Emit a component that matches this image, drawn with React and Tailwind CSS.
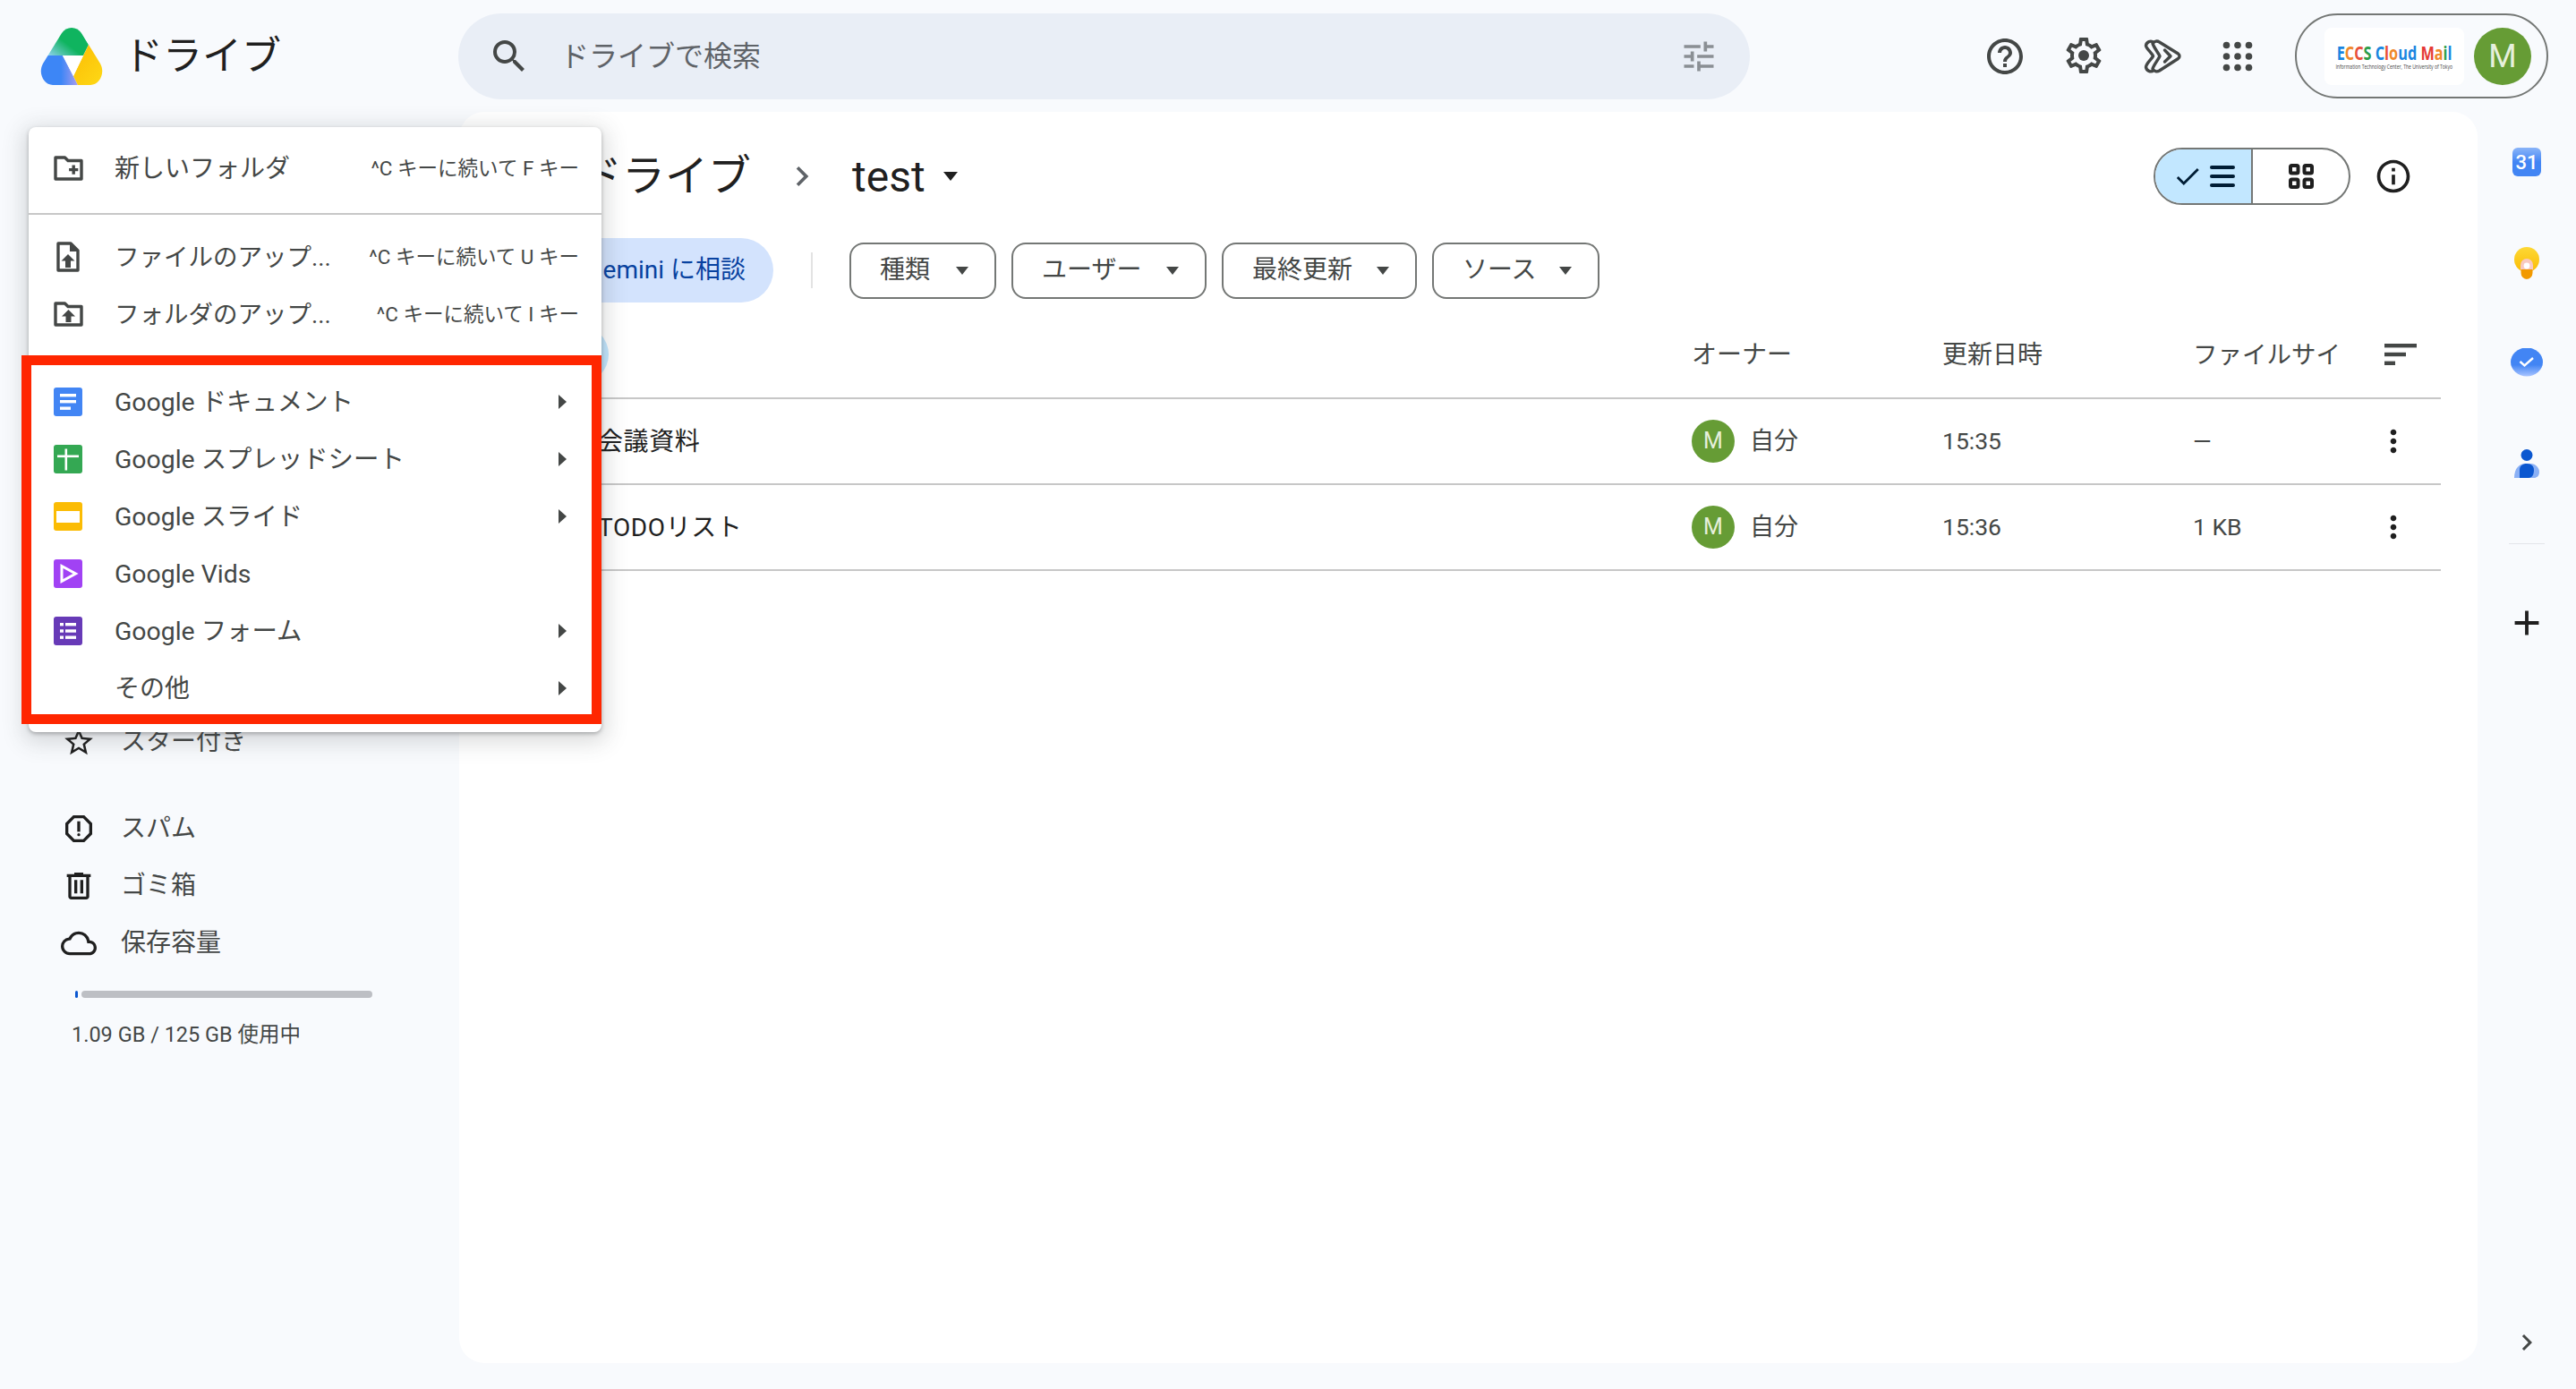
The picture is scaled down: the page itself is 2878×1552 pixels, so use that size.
import {
  MdSearch, MdTune, MdHelpOutline, MdOutlineInfo, MdCheck, MdMoreVert, MdAdd, MdChevronRight,
  MdArrowUpward, MdStarBorder, MdOutlineReport, MdOutlineCloud,
} from 'react-icons/md'

const FONT = 'font-[Roboto,"Noto_Sans_CJK_JP",sans-serif]'

function DriveLogo() {
  return (
    <svg width="70" height="64" viewBox="0 0 70 64" className="shrink-0">
      <defs>
        <clipPath id="logo-shape">
          <path d="M24 6 C29 -2 41 -2 46 6 L67 40 C73 51 66 64 56 64 L14 64 C4 64 -3 51 3 40 Z" />
        </clipPath>
        <linearGradient id="lg-green" x1="0" y1="1" x2="1" y2="0">
          <stop offset="0" stopColor="#8fd3f0" />
          <stop offset="0.42" stopColor="#0fb45f" />
        </linearGradient>
        <linearGradient id="lg-blue" x1="0" y1="0" x2="1" y2="0">
          <stop offset="0.6" stopColor="#3d86f6" />
          <stop offset="1" stopColor="#a99df0" />
        </linearGradient>
        <linearGradient id="lg-yellow" x1="0" y1="0" x2="1" y2="1">
          <stop offset="0" stopColor="#fbbc04" />
          <stop offset="1" stopColor="#ffdf1a" />
        </linearGradient>
      </defs>
      <g clipPath="url(#logo-shape)">
        <polygon points="8,31 48,31 54,19 40,-5 25,-5" fill="url(#lg-green)" />
        <polygon points="-5,31 25,31 42,64 42,70 -5,70" fill="url(#lg-blue)" />
        <polygon points="54,19 80,19 80,70 42,70 42,64 37,54" fill="url(#lg-yellow)" />
        <polygon points="25,31 48,31 37,54" fill="#fff" />
      </g>
    </svg>
  )
}

function SettingsIcon() {
  return (
    <svg width="48" height="48" viewBox="0 0 24 24" fill="#444746">
      <path d="M19.43 12.98c.04-.32.07-.64.07-.98 0-.34-.03-.66-.07-.98l2.11-1.65c.19-.15.24-.42.12-.64l-2-3.46c-.09-.16-.26-.25-.44-.25-.06 0-.12.01-.17.03l-2.49 1c-.52-.4-1.08-.73-1.69-.98l-.38-2.65C14.46 2.18 14.25 2 14 2h-4c-.25 0-.46.18-.49.42l-.38 2.65c-.61.25-1.17.59-1.69.98l-2.49-1c-.06-.02-.12-.03-.18-.03-.17 0-.34.09-.43.25l-2 3.46c-.13.22-.07.49.12.64l2.11 1.65c-.04.32-.07.65-.07.98 0 .33.03.66.07.98l-2.11 1.65c-.19.15-.24.42-.12.64l2 3.46c.09.16.26.25.44.25.06 0 .12-.01.17-.03l2.49-1c.52.4 1.08.73 1.69.98l.38 2.65c.03.24.24.42.49.42h4c.25 0 .46-.18.49-.42l.38-2.65c.61-.25 1.17-.59 1.69-.98l2.49 1c.06.02.12.03.18.03.17 0 .34-.09.43-.25l2-3.46c.12-.22.07-.49-.12-.64l-2.11-1.65zm-1.98-1.71c.04.31.05.52.05.73 0 .21-.02.43-.05.73l-.14 1.13.89.7 1.08.84-.7 1.21-1.27-.51-1.04-.42-.9.68c-.43.32-.84.56-1.25.73l-1.06.43-.16 1.13-.2 1.35h-1.4l-.19-1.35-.16-1.13-1.06-.43c-.43-.18-.83-.41-1.23-.71l-.91-.7-1.06.43-1.27.51-.7-1.21 1.08-.84.89-.7-.14-1.13c-.03-.31-.05-.54-.05-.74s.02-.43.05-.73l.14-1.13-.89-.7-1.08-.84.7-1.21 1.27.51 1.04.42.9-.68c.43-.32.84-.56 1.25-.73l1.06-.43.16-1.13.2-1.35h1.39l.19 1.35.16 1.13 1.06.43c.43.18.83.41 1.23.71l.91.7 1.06-.43 1.27-.51.7 1.21-1.07.85-.89.7.14 1.13z" />
      <circle cx="12" cy="12" r="3" />
    </svg>
  )
}

function GeminiChevrons() {
  return (
    <svg width="48" height="48" viewBox="0 0 48 48" fill="none" stroke="#444746" strokeWidth="3.4" strokeLinejoin="round" strokeLinecap="round">
      <path d="M14 9.5C16 6.5 19.5 6.5 21.5 8L42.5 21C44.5 22.5 44.5 25 42.5 26.5L21.5 40C19 41.5 15.5 41 14 38C15 34 20 28 22 23.7C20 19.5 15 13.5 14 9.5Z" />
      <path d="M15 8.5C12 5.5 7 8 6.5 12C6.5 15 13 20 14.5 23.7C13 27 6.5 32 6.5 36C7 40 12 42.5 15 39.5" />
      <path d="M27.5 17L34 23.7L27.5 30" />
    </svg>
  )
}

function AppsDots() {
  const dots = []
  for (let y = 0; y < 3; y++) {
    for (let x = 0; x < 3; x++) dots.push(<circle key={`${x}${y}`} cx={11.5 + x * 12.5} cy={11.5 + y * 12.5} r="3.8" />)
  }
  return (
    <svg width="48" height="48" viewBox="0 0 48 48" fill="#444746" className="shrink-0">{dots}</svg>
  )
}

function ListBars() {
  return (
    <svg width="28" height="24" viewBox="0 0 28 24" fill="#001d35">
      <rect width="28" height="4" rx="2" />
      <rect y="10" width="28" height="4" rx="2" />
      <rect y="20" width="28" height="4" rx="2" />
    </svg>
  )
}

function SortBars() {
  return (
    <svg width="36" height="24" viewBox="0 0 36 24" fill="#444746">
      <rect width="36" height="4.4" />
      <rect y="9.8" width="24" height="4.4" />
      <rect y="19.6" width="12" height="4.4" />
    </svg>
  )
}

function GridViewIcon() {
  return (
    <svg width="28" height="28" viewBox="0 0 28 28" fill="none" stroke="#1f1f1f" strokeWidth="4">
      <rect x="2" y="2" width="8.5" height="8.5" rx="1.5" />
      <rect x="17.5" y="2" width="8.5" height="8.5" rx="1.5" />
      <rect x="2" y="17.5" width="8.5" height="8.5" rx="1.5" />
      <rect x="17.5" y="17.5" width="8.5" height="8.5" rx="1.5" />
    </svg>
  )
}

function TrashIcon() {
  return (
    <svg width="40" height="40" viewBox="0 0 24 24" fill="#1f1f1f">
      <path d="M7 21q-.825 0-1.412-.587T5 19V6H4V4h5V3h6v1h5v2h-1v13q0 .825-.587 1.413T17 21H7ZM17 6H7v13h10V6ZM9 17h2V8H9v9Zm4 0h2V8h-2v9Z" />
    </svg>
  )
}

function Caret({ w = 14, h = 9, color = '#444746' }) {
  return (
    <svg width={w} height={h} viewBox="0 0 14 9" preserveAspectRatio="none" className="shrink-0">
      <polygon points="0,0 14,0 7,9" fill={color} />
    </svg>
  )
}

function SubArrow() {
  return (
    <svg width="9" height="16" viewBox="0 0 9 16" className="ml-auto shrink-0">
      <polygon points="0,0 9,8 0,16" fill="#444746" />
    </svg>
  )
}

function FolderPlusIcon() {
  return (
    <svg width="33" height="28" viewBox="0 0 33 28" className="shrink-0">
      <path d="M2 2H12.5L16 5.5H31V26H2Z" fill="none" stroke="#444746" strokeWidth="3.4" strokeLinejoin="round" />
      <path d="M20.5 10.5h3.4v3.4h3.4v3.4h-3.4v3.4h-3.4v-3.4h-3.4v-3.4h3.4Z" fill="#444746" />
    </svg>
  )
}

function FileUpIcon() {
  return (
    <svg width="26" height="34" viewBox="0 0 26 34" className="shrink-0">
      <path d="M2 2H16L24 10V32H2Z" fill="none" stroke="#444746" strokeWidth="3.4" strokeLinejoin="round" />
      <polygon points="15,2 24,11 15,11" fill="#444746" />
      <polygon points="13,14 20.5,21.5 16,21.5 16,29 10,29 10,21.5 5.5,21.5" fill="#444746" />
    </svg>
  )
}

function FolderUpIcon() {
  return (
    <svg width="33" height="28" viewBox="0 0 33 28" className="shrink-0">
      <path d="M2 2H12.5L16 5.5H31V26H2Z" fill="none" stroke="#444746" strokeWidth="3.4" strokeLinejoin="round" />
      <polygon points="16.5,9 24,16.5 19.5,16.5 19.5,23 13.5,23 13.5,16.5 9,16.5" fill="#444746" />
    </svg>
  )
}

function DocsIcon() {
  return (
    <svg width="32" height="32" viewBox="0 0 32 32">
      <rect width="32" height="32" rx="3" fill="#4285f4" />
      <rect x="7" y="7" width="18" height="3.4" fill="#fff" />
      <rect x="7" y="14" width="18" height="3.4" fill="#fff" />
      <rect x="7" y="21.5" width="12" height="3.4" fill="#fff" />
    </svg>
  )
}

function SheetsIcon() {
  return (
    <svg width="32" height="32" viewBox="0 0 32 32">
      <rect width="32" height="32" rx="3" fill="#34a853" />
      <rect x="4" y="11.5" width="24" height="2.6" fill="#fff" />
      <rect x="12.5" y="4.5" width="2.6" height="24" fill="#fff" />
    </svg>
  )
}

function SlidesIcon() {
  return (
    <svg width="32" height="32" viewBox="0 0 32 32">
      <rect width="32" height="32" rx="3" fill="#fbbc04" />
      <rect x="3" y="10" width="26" height="13" fill="#fff" />
    </svg>
  )
}

function VidsIcon() {
  return (
    <svg width="32" height="32" viewBox="0 0 32 32">
      <rect width="32" height="32" rx="3" fill="#a142f4" />
      <path d="M9 7.5 L24.5 16 L9 24.5 Z" fill="none" stroke="#fff" strokeWidth="3" />
    </svg>
  )
}

function FormsIcon() {
  return (
    <svg width="32" height="32" viewBox="0 0 32 32">
      <rect width="32" height="32" rx="3" fill="#673ab7" />
      <g fill="#fff">
        <rect x="7" y="7" width="4" height="3.4" /><rect x="13" y="7" width="12" height="3.4" />
        <rect x="7" y="14.3" width="4" height="3.4" /><rect x="13" y="14.3" width="12" height="3.4" />
        <rect x="7" y="21.5" width="4" height="3.4" /><rect x="13" y="21.5" width="12" height="3.4" />
      </g>
    </svg>
  )
}

function CalendarIcon() {
  return (
    <div className="w-8 h-8 rounded-[6px] bg-gradient-to-b from-[#8ab4f8] via-[#4285f4] to-[#4285f4] flex items-center justify-center text-[22px] font-medium text-white">31</div>
  )
}

function KeepIcon() {
  return (
    <svg width="28" height="36" viewBox="0 0 28 36">
      <defs>
        <linearGradient id="keep-y" x1="0" y1="0" x2="0" y2="1">
          <stop offset="0" stopColor="#fdd835" />
          <stop offset="1" stopColor="#fbbc04" />
        </linearGradient>
      </defs>
      <circle cx="14" cy="14" r="14" fill="url(#keep-y)" />
      <path d="M7 26V20a7 7 0 0 1 14 0V26Z" fill="#f8c9c0" />
      <path d="M7.5 25h13v4a7 7 0 0 1-7 7h1a7 7 0 0 1-7-7Z" fill="#f29900" />
      <circle cx="14" cy="21" r="3.4" fill="#fff" />
    </svg>
  )
}

function TasksIcon() {
  return (
    <svg width="36" height="32" viewBox="0 0 36 32">
      <defs>
        <linearGradient id="tasks-b" x1="0" y1="0" x2="0" y2="1">
          <stop offset="0.6" stopColor="#4285f4" />
          <stop offset="1" stopColor="#a9c4ff" />
        </linearGradient>
      </defs>
      <ellipse cx="18" cy="15.5" rx="18" ry="16" fill="url(#tasks-b)" />
      <path d="M10.5 15 L15.5 19.5 L25 11" fill="none" stroke="#fff" strokeWidth="2.4" />
    </svg>
  )
}

function ContactsIcon() {
  return (
    <svg width="28" height="32" viewBox="0 0 28 32">
      <circle cx="14" cy="6.5" r="6.5" fill="#0b57d0" />
      <path d="M0 32 C0 21 6 16 12 16 L18 16 C24 16 28 21 28 25 C28 30 25 32 22 32 Z" fill="#8ab0f5" />
      <path d="M6 32 L6 23 C6 18 10 16 14 16 C19 16 22 19 22 23 C22 28 20 32 16 32 Z" fill="#0b57d0" />
    </svg>
  )
}

function Avatar({ size = 'w-12 h-12 text-[25px]' }) {
  return (
    <div className={`${size} rounded-full bg-[#669c35] text-[#e6f0dc] flex items-center justify-center shrink-0`}>M</div>
  )
}

function ChipFilter({ label, width }) {
  return (
    <div className={`${width} h-[63px] rounded-2xl border-2 border-[#747775] flex items-center justify-between pl-[32px] pr-[29px] text-[28px] text-[#444746] shrink-0`}>
      <span>{label}</span>
      <Caret />
    </div>
  )
}

function MenuRow({ icon, label, shortcut, sub, size = 'text-[28px]' }) {
  return (
    <div className={`h-16 flex items-center pl-[28px] pr-[25px] ${size} text-[#444746]`}>
      <div className="w-8 flex justify-center shrink-0">{icon}</div>
      <span className="ml-9 whitespace-nowrap translate-y-px">{label}</span>
      {shortcut && <span className="ml-auto text-[22.5px] whitespace-nowrap translate-y-px">{shortcut}</span>}
      {sub && <div className="ml-auto pr-[14px] flex"><SubArrow /></div>}
    </div>
  )
}

function SideRow({ icon, label }) {
  return (
    <div className="h-16 flex items-center pl-[68px] text-[28px] text-[#444746]">
      <div className="w-10 flex justify-center shrink-0 text-[#1f1f1f]">{icon}</div>
      <span className="ml-[27px]">{label}</span>
    </div>
  )
}

const TABLE_COLS = 'grid grid-cols-[1339px_280px_280px_208px_1fr] items-center'

function FileRow({ name, time, size }) {
  return (
    <div className={`${TABLE_COLS} h-24 border-b-2 border-[#c7c7c7] text-[26.5px] text-[#444746]`}>
      <div className="pl-[117px] text-[28px] tracking-[0.6px] text-[#1f1f1f] translate-y-px">{name}</div>
      <div className="flex items-center gap-[17px]">
        <Avatar />
        <span className="text-[27px]">自分</span>
      </div>
      <div>{time}</div>
      <div>{size}</div>
      <div><MdMoreVert size={40} className="text-[#1f1f1f] -ml-1" /></div>
    </div>
  )
}

export default function App() {
  const ecc = [
    ['E', 'text-[#1a86e0]'], ['C', 'text-[#f0892b]'], ['C', 'text-[#e8503a]'], ['S', 'text-[#2d9d4c]'],
    [' ', ''],
    ['C', 'text-[#1a86e0]'], ['l', 'text-[#e8503a]'], ['o', 'text-[#f0892b]'], ['u', 'text-[#1a86e0]'], ['d', 'text-[#1a86e0]'],
    [' ', ''],
    ['M', 'text-[#e53a35]'], ['a', 'text-[#f0892b]'], ['i', 'text-[#2d9d4c]'], ['l', 'text-[#1a86e0]'],
  ]

  return (
    <div className={`relative w-screen h-screen overflow-hidden bg-[#f8fafd] flex flex-col ${FONT}`}>
      <header className="h-[125px] flex items-center shrink-0">
        <div className="w-[512px] pl-[45px] flex items-center gap-[23px] shrink-0">
          <DriveLogo />
          <span className="text-[44px] text-[#1f1f1f]">ドライブ</span>
        </div>
        <div className="w-[1443px] h-24 rounded-full bg-[#e9eef6] flex items-center pl-[33px] pr-[35px]">
          <MdSearch size={48} className="text-[#444746] shrink-0" />
          <span className="ml-[33px] text-[32px] text-[#5f6368]">ドライブで検索</span>
          <MdTune size={44} className="ml-auto text-[#8a8f94]" />
        </div>
        <div className="ml-auto flex items-center pr-[31px]">
          <MdHelpOutline size={48} className="text-[#444746]" />
          <div className="ml-10 -translate-y-px"><SettingsIcon /></div>
          <div className="ml-[39px]"><GeminiChevrons /></div>
          <div className="ml-[37px]"><AppsDots /></div>
          <div className="ml-10 w-[283px] h-[95px] rounded-full border-2 border-[#747775] flex items-center justify-end pr-[17px] gap-[11px]">
            <div className="w-[156px] h-16 bg-white rounded-lg flex flex-col items-center justify-center font-['Open_Sans',sans-serif]">
              <div className="text-[22px] leading-[24px] font-bold whitespace-pre scale-x-[0.74]">
                {ecc.map(([c, color], i) => <span key={i} className={color}>{c}</span>)}
              </div>
              <div className="text-[7px] leading-[9px] text-[#444] whitespace-nowrap scale-x-[0.72]">Information Technology Center, The University of Tokyo</div>
            </div>
            <Avatar size="w-16 h-16 text-[36px]" />
          </div>
        </div>
      </header>

      <div className="flex flex-1 min-h-0">
        <aside className="w-[513px] shrink-0 pt-[672px]">
          <SideRow icon={<MdStarBorder size={38} />} label="スター付き" />
          <div className="mt-[33px]">
            <SideRow icon={<MdOutlineReport size={40} />} label="スパム" />
            <SideRow icon={<TrashIcon />} label="ゴミ箱" />
            <SideRow icon={<MdOutlineCloud size={46} />} label="保存容量" />
          </div>
          <div className="mt-[21px] ml-[84px] w-[332px] h-2 flex gap-1">
            <div className="w-[3px] bg-[#0b57d0] rounded-sm" />
            <div className="flex-1 bg-[#bdbfc4] rounded-full" />
          </div>
          <div className="mt-[24px] ml-20 text-[23.5px] text-[#444746] whitespace-nowrap">1.09 GB / 125 GB 使用中</div>
        </aside>

        <main className="w-[2255px] shrink-0 mb-[29px] bg-white rounded-[28px] pl-[38px] pr-[41px] pt-10">
          <div className="h-16 flex items-center pr-[31px]">
            <span className="text-[48px] text-[#1f1f1f]">マイドライブ</span>
            <MdChevronRight size={44} className="ml-[35px] text-[#5f6368]" />
            <span className="ml-[34px] text-[48px] text-[#1f1f1f] translate-y-px">test</span>
            <div className="ml-[20px]"><Caret w={16} h={10} color="#1f1f1f" /></div>
            <div className="ml-auto w-[220px] h-16 rounded-full border-2 border-[#747775] overflow-hidden flex shrink-0">
              <div className="w-[109px] bg-[#c2e7ff] border-r-2 border-[#747775] flex items-center justify-center gap-[8px] text-[#001d35]">
                <MdCheck size={34} />
                <ListBars />
              </div>
              <div className="flex-1 flex items-center justify-center"><GridViewIcon /></div>
            </div>
            <MdOutlineInfo size={44} className="ml-[26px] text-[#1f1f1f]" />
          </div>

          <div className="mt-[37px] h-[72px] flex items-center">
            <div className="h-[72px] w-[313px] rounded-full bg-[#d3e3fd] flex items-center justify-end pr-[31px] text-[28px] text-[#0842a0]">Gemini に相談</div>
            <div className="ml-[42px] w-0.5 h-10 bg-[#e3e3e3]" />
            <div className="ml-[41px] flex gap-[17px]">
              <ChipFilter label="種類" width="w-[164px]" />
              <ChipFilter label="ユーザー" width="w-[218px]" />
              <ChipFilter label="最終更新" width="w-[218px]" />
              <ChipFilter label="ソース" width="w-[187px]" />
            </div>
          </div>

          <div className={`${TABLE_COLS} mt-[10px] h-[98px] border-b-2 border-[#c7c7c7] text-[28px] text-[#444746]`}>
            <div className="flex items-center gap-[9px]">
              <span className="text-[#1f1f1f]">名前</span>
              <div className="w-16 h-16 rounded-full bg-[#c2e7ff] flex items-center justify-center"><MdArrowUpward size={32} /></div>
            </div>
            <div className="translate-y-px">オーナー</div>
            <div className="translate-y-px">更新日時</div>
            <div className="whitespace-nowrap text-[27.5px] translate-y-px">ファイルサイ</div>
            <div className="pl-[6px]"><SortBars /></div>
          </div>
          <FileRow name="会議資料" time="15:35" size="—" />
          <FileRow name="TODOリスト" time="15:36" size="1 KB" />
        </main>

        <nav className="flex-1 flex flex-col items-center pt-10 pb-[34px]">
          <CalendarIcon />
          <div className="mt-[79px] flex"><KeepIcon /></div>
          <div className="mt-[77px] flex"><TasksIcon /></div>
          <div className="mt-[81px] flex"><ContactsIcon /></div>
          <div className="mt-[73px] w-10 h-px bg-[#e3e6ea]" />
          <MdAdd size={46} className="mt-[65px] text-[#1f1f1f]" />
          <MdChevronRight size={36} className="mt-auto text-[#444746]" />
        </nav>
      </div>

      {/* new-item popup, sits over sidebar and list */}
      <div className="absolute left-8 top-[142px] w-[640px] h-[676px] bg-white rounded-lg shadow-[0_2px_4px_rgba(60,64,67,0.35),0_6px_24px_6px_rgba(60,64,67,0.18)] pt-[14px]">
        <MenuRow icon={<FolderPlusIcon />} label="新しいフォルダ" shortcut="^C キーに続いて F キー" />
        <div className="mt-[18px] h-0.5 bg-[#c7c7c7]" />
        <div className="mt-[15px]">
          <MenuRow icon={<FileUpIcon />} size="text-[27.5px]" label="ファイルのアップ..." shortcut="^C キーに続いて U キー" />
          <MenuRow icon={<FolderUpIcon />} size="text-[27.5px]" label="フォルダのアップ..." shortcut="^C キーに続いて I キー" />
        </div>
        <div className="mt-[34px]">
          <MenuRow icon={<DocsIcon />} size="text-[28.4px]" label="Google ドキュメント" sub />
          <MenuRow icon={<SheetsIcon />} size="text-[28.4px]" label="Google スプレッドシート" sub />
          <MenuRow icon={<SlidesIcon />} size="text-[28.4px]" label="Google スライド" sub />
          <MenuRow icon={<VidsIcon />} size="text-[28.4px]" label="Google Vids" />
          <MenuRow icon={<FormsIcon />} size="text-[28.4px]" label="Google フォーム" sub />
          <MenuRow label="その他" sub />
        </div>
      </div>

      {/* red annotation frame */}
      <div className="absolute left-6 top-[397px] w-[648px] h-[412px] border-[11px] border-[#ff2600]" />
    </div>
  )
}
